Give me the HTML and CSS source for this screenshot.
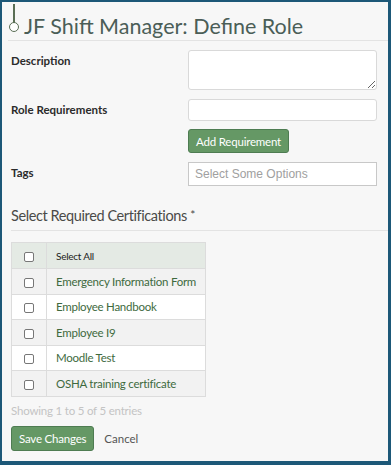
FILE: index.html
```html
<!DOCTYPE html>
<html>
<head>
<meta charset="utf-8">
<link rel="stylesheet" href="styles.css">
</head>
<body>
<div class="frame">
  <div class="title-row">
    <span class="node"></span>
    <h1 class="title">JF Shift Manager: Define Role</h1>
  </div>
  <div class="form">
    <label class="lbl">Description</label>
    <div class="field"><textarea class="txt"></textarea></div>
    <label class="lbl">Role Requirements</label>
    <div class="field">
      <input class="inp" type="text">
      <button class="btn add">Add Requirement</button>
    </div>
    <label class="lbl">Tags</label>
    <div class="field"><div class="select">Select Some Options</div></div>
  </div>
  <h2 class="sec">Select Required Certifications <span class="req">*</span></h2>
  <table class="tbl">
    <thead>
      <tr><th class="cb"><span class="box"></span></th><th class="name">Select All</th></tr>
    </thead>
    <tbody>
      <tr class="odd"><td class="cb"><span class="box"></span></td><td>Emergency Information Form</td></tr>
      <tr class="even"><td class="cb"><span class="box"></span></td><td>Employee Handbook</td></tr>
      <tr class="odd"><td class="cb"><span class="box"></span></td><td>Employee I9</td></tr>
      <tr class="even"><td class="cb"><span class="box"></span></td><td>Moodle Test</td></tr>
      <tr class="odd"><td class="cb"><span class="box"></span></td><td>OSHA training certificate</td></tr>
    </tbody>
  </table>
  <div class="info">Showing 1 to 5 of 5 entries</div>
  <div class="actions">
    <button class="btn save">Save Changes</button>
    <span class="cancel">Cancel</span>
  </div>
</div>
</body>
</html>
```
FILE: styles.css
```css
* { box-sizing: border-box; }
html, body { margin: 0; padding: 0; }
body { font-family: Lato, "Open Sans", sans-serif; background: #f7f7f7; }
.frame {
  width: 391px; height: 465px;
  border: 2px solid #1d5878;
  border-right-width: 3px;
  border-bottom-width: 4px;
  background: #f7f7f7;
  padding: 0 0 0 9px;
}
.title-row {
  display: flex; align-items: center;
  height: 39px;
  border-bottom: 1px solid #e3e3e3;
  margin-left: -3px;
  padding-top: 5px;
  position: relative;
}
.node {
  width: 10px; height: 10px; border-radius: 50%;
  border: 1.5px solid #5a6e55; background: #fff;
  margin-right: 5px; margin-top: 6px; margin-left: 1px;
  position: relative; flex: none;
}
.node::before {
  content: ""; position: absolute; left: 3px; bottom: 8px;
  width: 1.5px; height: 19px; background: #5a6e55;
}
.title {
  margin: 0; font-weight: 400; font-size: 21.5px; color: #4b5e57;
  line-height: 28px; margin-top: 4px;
}
.form {
  display: grid; grid-template-columns: 177px 189px;
  row-gap: 9px; margin-top: 9px;
}
.lbl { font-size: 11.5px; font-weight: 700; color: #2b2b2b; padding-top: 4px; }
.field { display: flex; flex-direction: column; align-items: flex-start; gap: 8px; }
.txt {
  width: 189px; height: 40px; border: 1px solid #d9d9d9; border-radius: 3px;
  background: #fff; display: block; resize: vertical; margin: 0;
}
.inp {
  width: 189px; height: 22px; border: 1px solid #d9d9d9; border-radius: 3px;
  background: #fff; margin: 0; display: block;
}
.btn {
  font-family: Lato, "Open Sans", sans-serif; font-size: 11.5px; color: #fff;
  letter-spacing: -0.2px;
  background: #659865; border: 1px solid #4e7c52; border-radius: 3px;
  padding: 0 7px; height: 24px; cursor: pointer;
}
.select {
  width: 189px; height: 24px; border: 1px solid #c8c8c8; background: #fff;
  font-family: "Liberation Sans", Arial, sans-serif; font-size: 12px; color: #a0a0a0;
  padding: 4px 6px;
}
.sec {
  font-size: 14.5px; font-weight: 400; color: #4a4a48; margin: 19px 0 0 0;
  letter-spacing: -0.4px;
  padding-bottom: 4px; line-height: 20px;
  border-bottom: 1px solid #e3e3e3;
}
.req { font-size: 12px; vertical-align: 2px; }
.tbl {
  border-collapse: collapse; margin-top: 11px; width: 195px;
  font-size: 11.5px; table-layout: fixed; letter-spacing: -0.25px;
}
.tbl th, .tbl td { border: 1px solid #dcdcdc; height: 25.5px; padding: 0 9px; text-align: left; white-space: nowrap; }
.tbl th { background: #e4eae4; font-weight: 400; font-size: 10px; color: #222; height: 26px; }
.tbl td { color: #3e6a3e; }
.tbl .cb { width: 35px; padding: 0; text-align: center; }
.box {
  display: inline-block; width: 10px; height: 10px; border: 1px solid #777;
  border-radius: 2px; background: #fff; vertical-align: middle;
}
.odd td { background: #f2f2f2; }
.even td { background: #fff; }
.info { font-size: 11.5px; color: #c4c4c4; margin-top: 7px; letter-spacing: -0.2px; }
.actions { display: flex; align-items: center; gap: 10px; margin-top: 9px; }
.save { height: 25px; padding: 0 7px; }
.cancel { font-size: 11.5px; color: #555; }
```
